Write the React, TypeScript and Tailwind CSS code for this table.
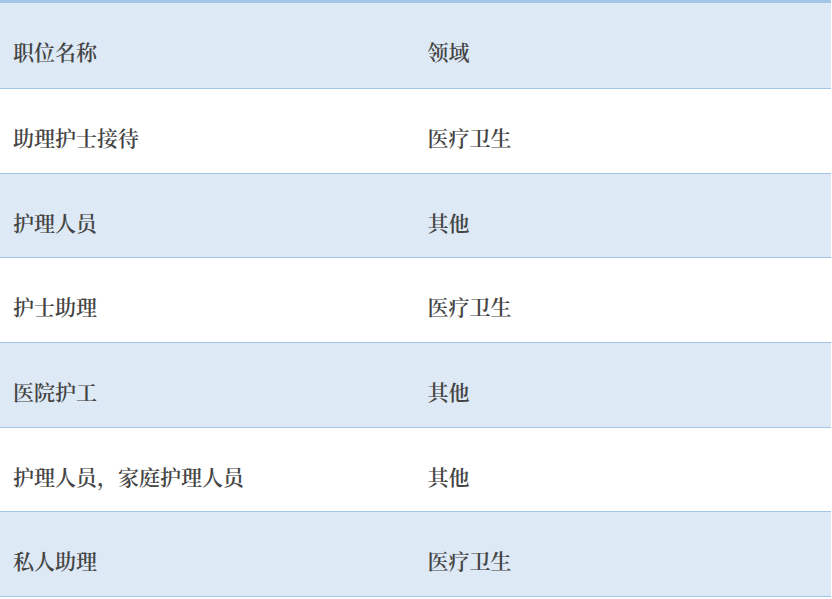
import React from "react";

interface Job {
  title: string;
  field: string;
}

const JOBS: Job[] = [
  { title: "助理护士接待", field: "医疗卫生" },
  { title: "护理人员", field: "其他" },
  { title: "护士助理", field: "医疗卫生" },
  { title: "医院护工", field: "其他" },
  { title: "护理人员，家庭护理人员", field: "其他" },
  { title: "私人助理", field: "医疗卫生" },
];

const font = { fontFamily: '"Noto Serif CJK SC", "Noto Sans CJK SC", serif' };

function Row({ a, b, shaded, header }: { a: string; b: string; shaded: boolean; header?: boolean }) {
  return (
    <div
      className={`grid grid-cols-2 border-b border-[#a3c6e8] ${header ? "h-[86px] pt-[13px]" : "h-[84.67px] pt-[14px]"} ${shaded ? "bg-[#dde9f5]" : "bg-white"}`}
    >
      <div className="flex items-center pl-[13px] text-[21px] font-semibold text-[#444444]">{a}</div>
      <div className="flex items-center pl-[12px] text-[21px] font-semibold text-[#444444]">{b}</div>
    </div>
  );
}

export default function App() {
  return (
    <div className="w-[832px] h-[599px] bg-white" style={font}>
      <div className="w-[831px] border-t-[3px] border-[#a3c6e8]">
        <Row a="职位名称" b="领域" shaded header />
        {JOBS.map((job, i) => (
          <Row key={job.title} a={job.title} b={job.field} shaded={i % 2 === 1} />
        ))}
      </div>
    </div>
  );
}
